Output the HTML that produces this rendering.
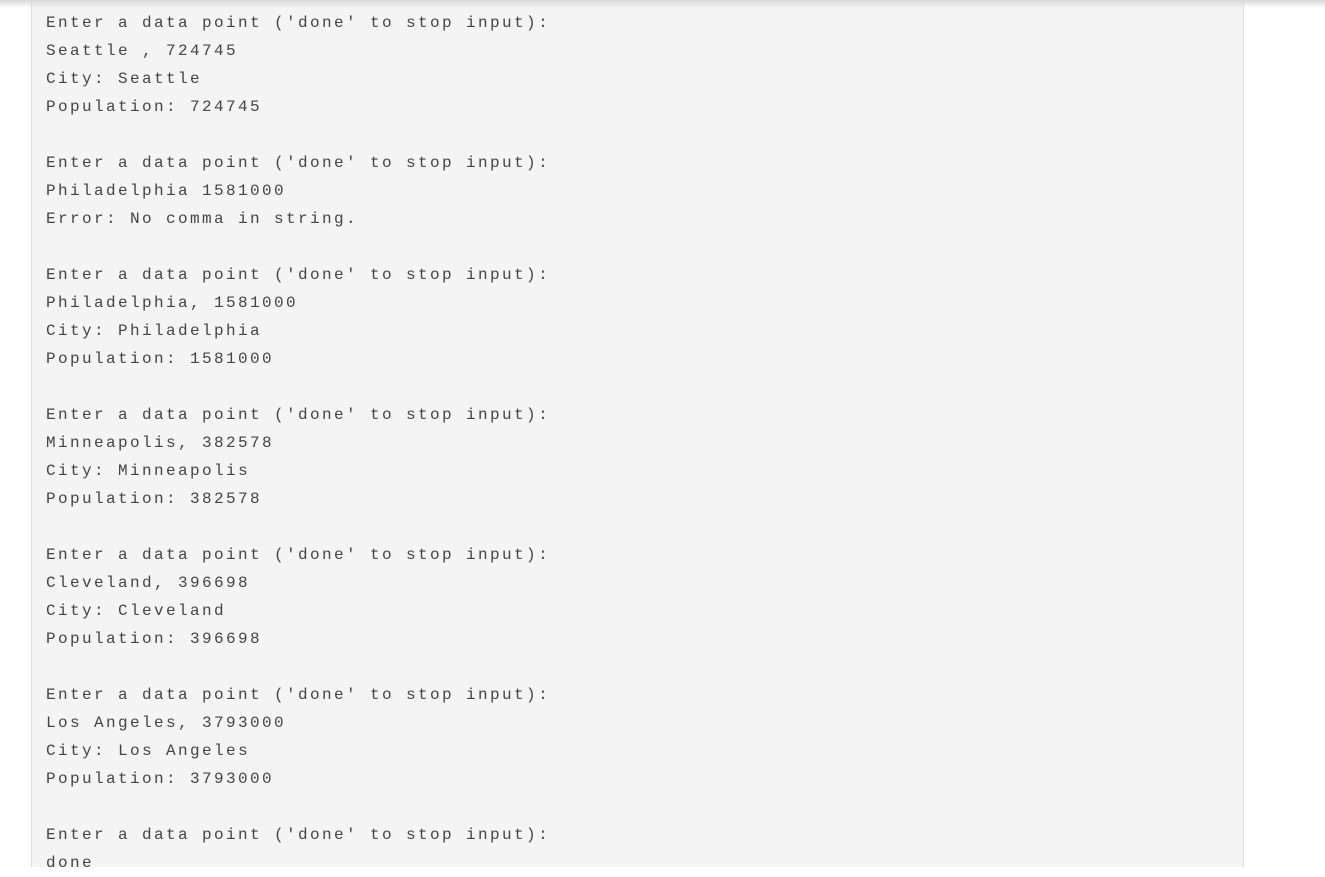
<!DOCTYPE html>
<html><head><style>
html,body{margin:0;padding:0;width:1325px;height:867px;overflow:hidden;background:#fff;}
.shadow{position:absolute;left:0;top:0;width:1325px;height:8px;background:linear-gradient(#d8d8d8,rgba(255,255,255,0));z-index:2;}
.panel{position:absolute;left:31px;top:0;width:1211px;height:867px;background:#f4f4f4;border-left:1px solid #dcdcdc;border-right:1px solid #dcdcdc;}
pre{margin:0;position:absolute;left:14px;top:9px;font-family:"Liberation Mono","DejaVu Sans Mono",monospace;font-size:16px;letter-spacing:2.4px;line-height:28px;color:#444;}
</style></head><body>
<div class="shadow"></div>
<div class="panel"><pre>Enter a data point ('done' to stop input):
Seattle , 724745
City: Seattle
Population: 724745

Enter a data point ('done' to stop input):
Philadelphia 1581000
Error: No comma in string.

Enter a data point ('done' to stop input):
Philadelphia, 1581000
City: Philadelphia
Population: 1581000

Enter a data point ('done' to stop input):
Minneapolis, 382578
City: Minneapolis
Population: 382578

Enter a data point ('done' to stop input):
Cleveland, 396698
City: Cleveland
Population: 396698

Enter a data point ('done' to stop input):
Los Angeles, 3793000
City: Los Angeles
Population: 3793000

Enter a data point ('done' to stop input):
done</pre></div>
</body></html>
